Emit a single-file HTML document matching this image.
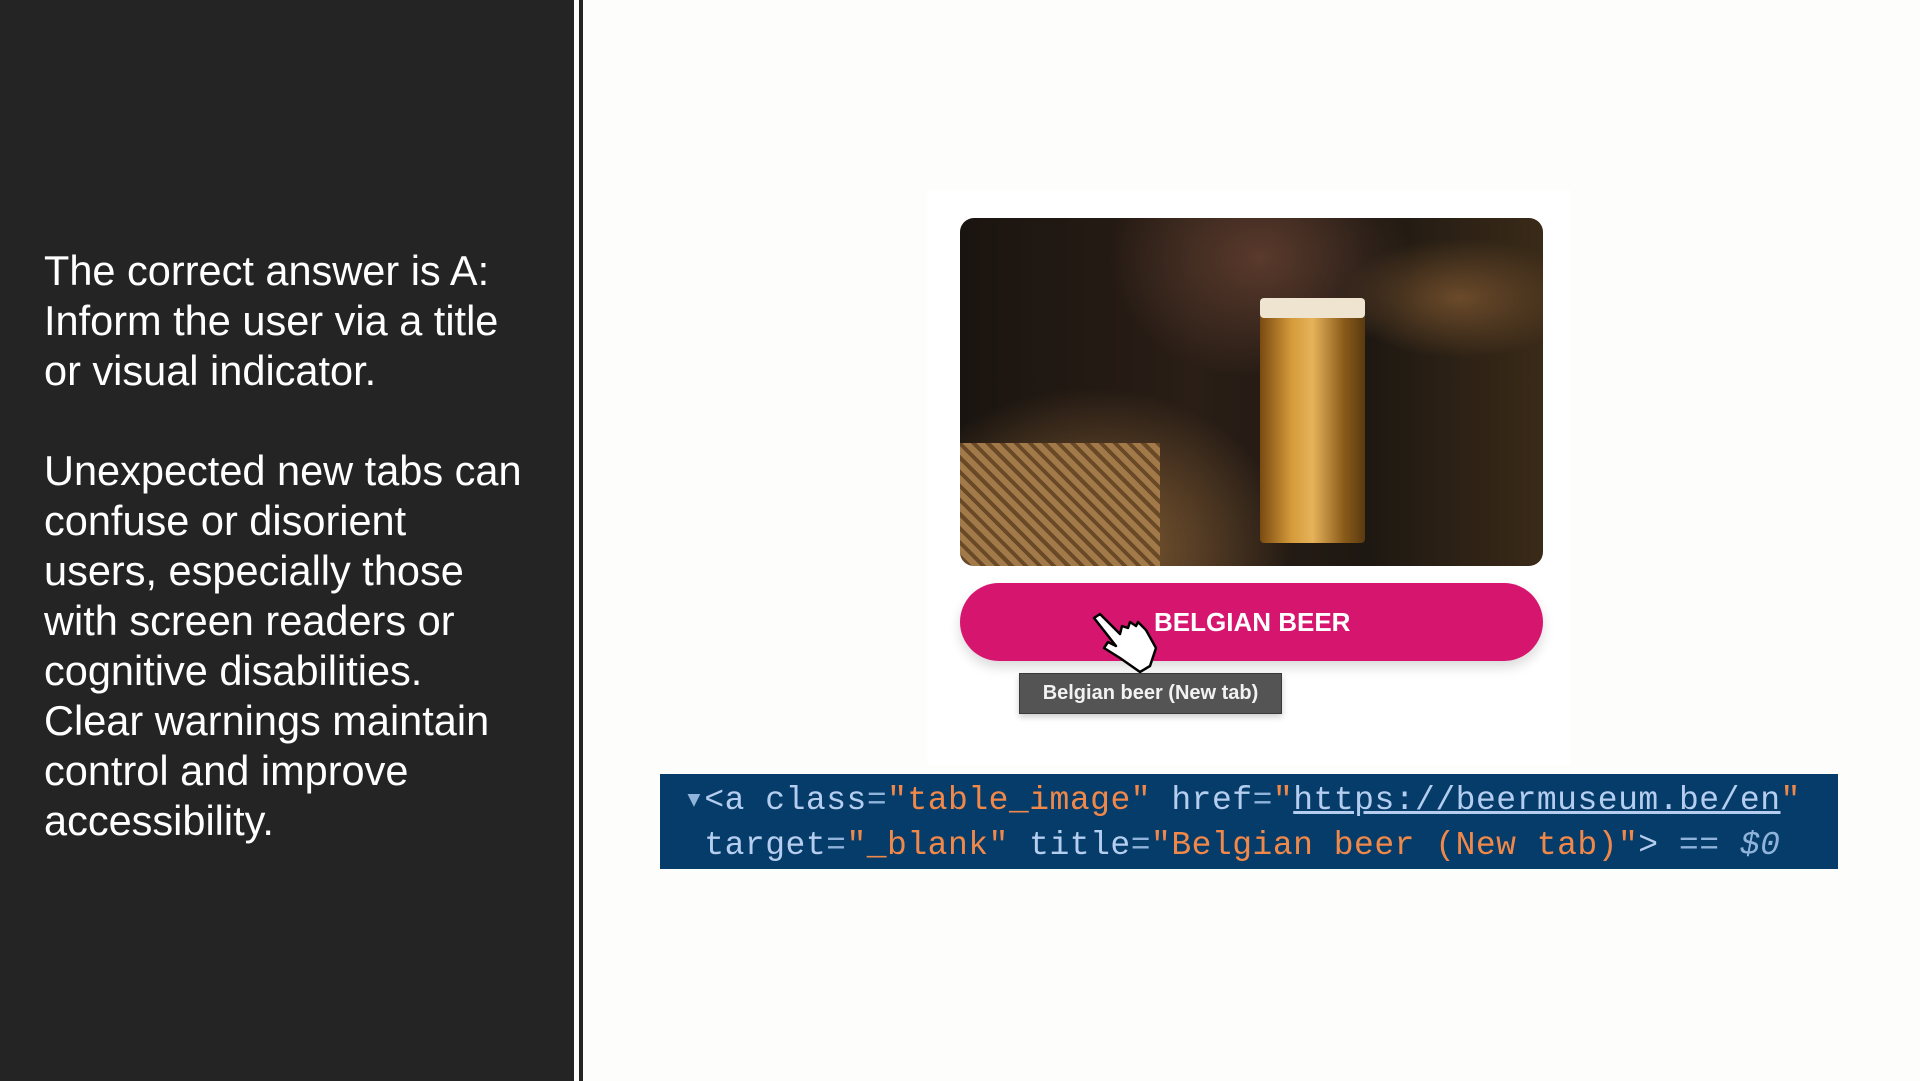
<!DOCTYPE html>
<html><head><meta charset="utf-8"><style>
*{margin:0;padding:0;box-sizing:border-box}
html,body{width:1920px;height:1081px;overflow:hidden;background:#fdfdfb}
.left{position:absolute;left:0;top:0;width:574px;height:1081px;background:#242424}
.stripe{position:absolute;left:574px;top:0;width:10px;height:1081px;background:#fdfdfb}
.line{position:absolute;left:579px;top:0;width:4px;height:1081px;background:#242424}
.txt{position:absolute;left:44px;top:246px;width:530px;color:#fff;font-family:"Liberation Sans",sans-serif;font-size:41.5px;line-height:50px;letter-spacing:0}
.card{position:absolute;left:927px;top:190px;width:644px;height:575px;background:#fff}
.img{position:absolute;left:960px;top:218px;width:583px;height:348px;border-radius:14px;overflow:hidden;
background:radial-gradient(ellipse 120px 60px at 500px 80px,#6b4a2a,transparent),
radial-gradient(ellipse 200px 160px at 130px 330px,#8a6236,transparent),
radial-gradient(ellipse 150px 120px at 300px 40px,#5a3a2c,transparent),
linear-gradient(90deg,#1a1410,#2a1e16 40%,#1e1812 70%,#3a2a18)}
.glass{position:absolute;left:300px;top:85px;width:105px;height:240px;background:linear-gradient(90deg,#7a4a12,#d59a3a 30%,#e6b35a 50%,#8a5a1a 80%,#5a3a10);border-radius:4px}
.foam{position:absolute;left:300px;top:80px;width:105px;height:20px;background:#eee4d0;border-radius:4px}
.basket{position:absolute;left:0;top:225px;width:200px;height:125px;background:repeating-linear-gradient(45deg,#a27a4a 0 6px,#6a4a26 6px 10px)}
.btn{position:absolute;left:960px;top:583px;width:583px;height:78px;border-radius:39px;background:#d6156f;box-shadow:0 6px 12px rgba(0,0,0,.15);color:#fff;font-family:"Liberation Sans",sans-serif;font-weight:bold;font-size:26px;line-height:78px;padding-left:194px}
.tip{position:absolute;left:1019px;top:673px;width:263px;height:41px;background:#545454;border:1px solid #3a3a3a;color:#f2f2f2;font-family:"Liberation Sans",sans-serif;font-weight:bold;font-size:20px;line-height:39px;text-align:center;box-shadow:0 3px 6px rgba(0,0,0,.2)}
.code{position:absolute;left:660px;top:774px;width:1178px;height:95px;background:#053c69;font-family:"Liberation Mono",monospace;font-size:33px;line-height:45px;color:#b5cdef;padding:4px 0 0 24px;white-space:pre;letter-spacing:0.5px}
.o{color:#f0884a}.g{color:#8fb3da}.u{text-decoration:underline}
</style></head><body>
<div class="left"></div><div class="stripe"></div><div class="line"></div>
<div class="txt">The correct answer is A:<br>Inform the user via a title<br>or visual indicator.<br><br>Unexpected new tabs can<br>confuse or disorient<br>users, especially those<br>with screen readers or<br>cognitive disabilities.<br>Clear warnings maintain<br>control and improve<br>accessibility.</div>
<div class="card"></div>
<div class="img"><div class="basket"></div><div class="glass"></div><div class="foam"></div></div>
<div class="btn">BELGIAN BEER</div>
<svg style="position:absolute;left:1090px;top:608px" width="75" height="65" viewBox="0 0 75 65"><path d="M4 10 L10 6 L30 26 L32 18 L38 20 L40 14 L46 18 L48 14 L56 22 L66 40 L60 58 L50 64 L30 50 L14 40 L18 34 L26 38 Z" fill="#fff" stroke="#000" stroke-width="2.5" stroke-linejoin="round"/></svg>
<div class="tip">Belgian beer (New tab)</div>
<div class="code"><span class="g">▾</span>&lt;a class<span class="g">=</span><span class="o">"table_image"</span> href<span class="g">=</span><span class="o">"<span class="u" style="color:#b5cdef">https://beermuseum.be/en</span>"</span>
 target<span class="g">=</span><span class="o">"_blank"</span> title<span class="g">=</span><span class="o">"Belgian beer (New tab)"</span>&gt; <span class="g">== <i>$0</i></span></div>
</body></html>
